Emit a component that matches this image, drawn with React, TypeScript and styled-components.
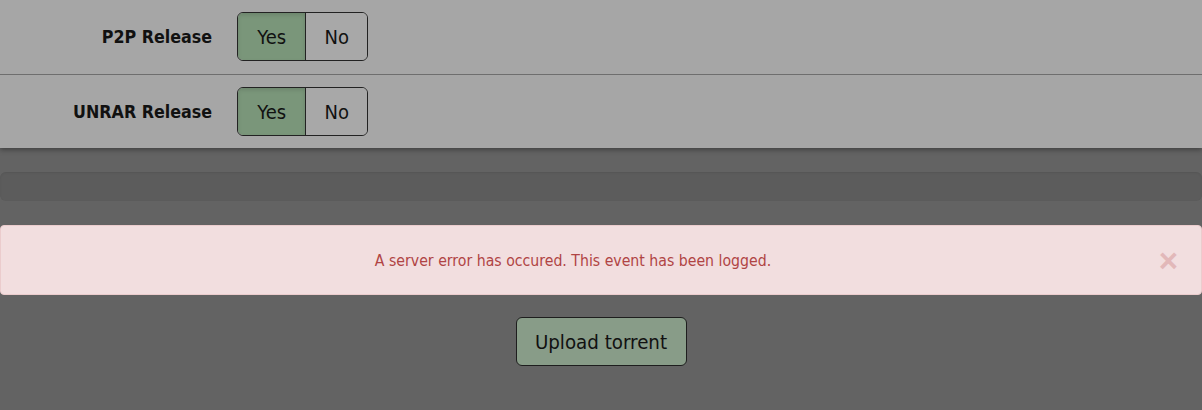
import React from "react";
import styled, { createGlobalStyle } from "styled-components";

const Global = createGlobalStyle`
  html, body { margin: 0; padding: 0; background: #636363; }
  body { font-family: "DejaVu Sans Condensed", "DejaVu Sans", sans-serif; }
  * { box-sizing: border-box; }
`;

const Page = styled.div`
  width: 1202px;
  min-height: 410px;
  background: #636363;
  display: flex;
  flex-direction: column;
`;

const Panel = styled.div`
  background: #a6a6a6;
  box-shadow: 0 2px 5px rgba(0, 0, 0, 0.35);
  position: relative;
  z-index: 1;
`;

const Row = styled.div<{ $last?: boolean }>`
  display: grid;
  grid-template-columns: 212px auto;
  column-gap: 25px;
  align-items: center;
  padding: 12px 0 ${(p) => (p.$last ? "12px" : "13px")};
  border-bottom: ${(p) => (p.$last ? "none" : "1px solid #6e6e6e")};
`;

const Label = styled.div`
  text-align: right;
  font-weight: bold;
  font-size: 17.7px;
  color: #111;
`;

const Toggle = styled.div`
  display: flex;
  width: 131px;
  height: 49px;
  border: 1px solid #222;
  border-radius: 6px;
  overflow: hidden;
`;

const Seg = styled.div<{ $active?: boolean; $w: number }>`
  width: ${(p) => p.$w}px;
  display: flex;
  align-items: center;
  justify-content: center;
  font-size: 20px;
  color: #111;
  background: ${(p) => (p.$active ? "#7a967a" : "#a8a8a8")};
  box-shadow: ${(p) => (p.$active ? "inset 0 2px 4px rgba(0,0,0,0.12)" : "none")};
  border-left: ${(p) => (p.$active ? "none" : "1px solid #222")};
`;

const Body = styled.div`
  display: flex;
  flex-direction: column;
  align-items: center;
  padding-top: 24px;
`;

const Bar = styled.div`
  align-self: stretch;
  height: 29px;
  background: #5c5c5c;
  border-radius: 6px;
  box-shadow: inset 0 1px 2px rgba(0, 0, 0, 0.08);
`;

const Alert = styled.div`
  align-self: stretch;
  margin-top: 24px;
  height: 70px;
  background: #f2dedf;
  border: 1px solid #ebcccd;
  border-radius: 4px;
  display: flex;
  align-items: center;
  justify-content: center;
  padding: 0 71px 0 15px;
  position: relative;
  color: #b04444;
  font-size: 15.7px;
`;

const Close = styled.span`
  position: absolute;
  right: 23px;
  top: 50%;
  transform: translateY(-48%);
  font-size: 33px;
  font-weight: bold;
  color: #e2b8b9;
  line-height: 1;
  font-family: "Liberation Sans", sans-serif;
`;

const UploadButton = styled.button`
  margin-top: 22px;
  width: 171px;
  height: 49px;
  background: #889c88;
  border: 1px solid #1e1e1e;
  border-radius: 6px;
  font-family: "DejaVu Sans Condensed", "DejaVu Sans", sans-serif;
  font-size: 20.3px;
  color: #111;
  padding: 0;
`;

const rows = ["P2P Release", "UNRAR Release"];

export default function App() {
  return (
    <Page>
      <Global />
      <Panel>
        {rows.map((r, i) => (
          <Row key={r} $last={i === rows.length - 1}>
            <Label>{r}</Label>
            <Toggle>
              <Seg $active $w={68}>Yes</Seg>
              <Seg $w={62}>No</Seg>
            </Toggle>
          </Row>
        ))}
      </Panel>
      <Body>
        <Bar />
        <Alert>
          A server error has occured. This event has been logged.
          <Close>×</Close>
        </Alert>
        <UploadButton>Upload torrent</UploadButton>
      </Body>
    </Page>
  );
}
